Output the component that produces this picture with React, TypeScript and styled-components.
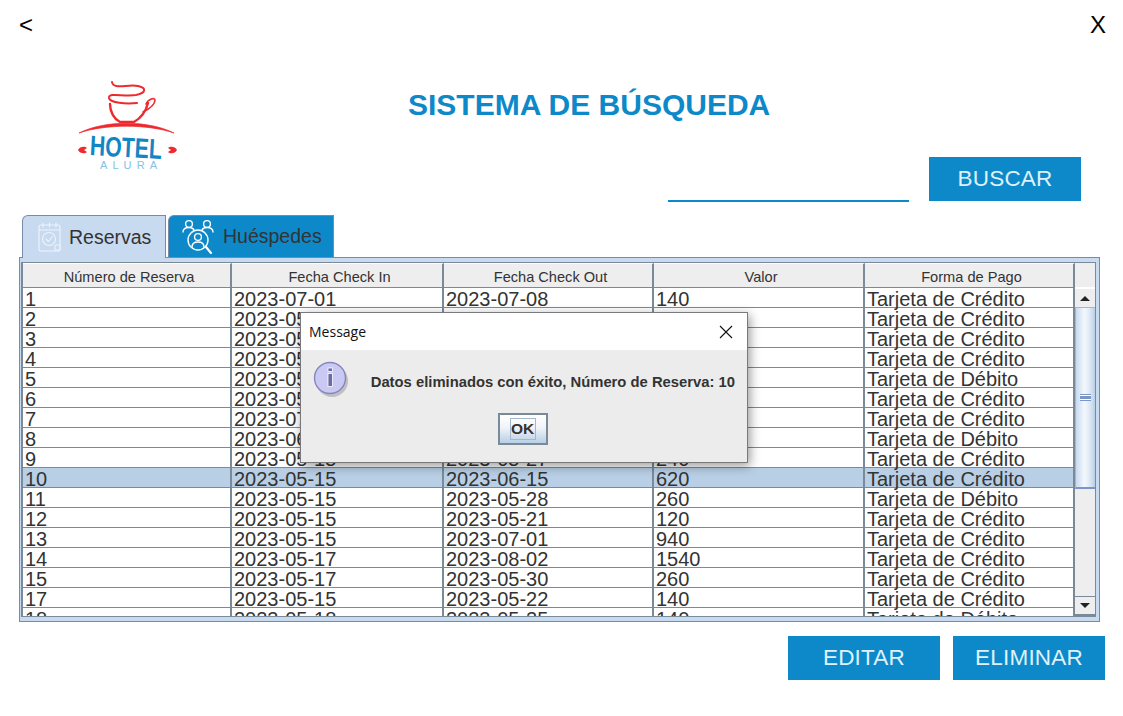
import styled, { createGlobalStyle } from 'styled-components';

const GlobalStyle = createGlobalStyle`
  html, body {
    margin: 0;
    padding: 0;
    background: #fff;
  }
  * {
    box-sizing: border-box;
  }
`;

const BLUE = '#0d89c9';
const COLUMNS = '209px 212px 210px 211px 210px';

const Page = styled.div`
  position: relative;
  width: 1123px;
  height: 716px;
  overflow: hidden;
  display: flex;
  flex-direction: column;
  background: #fff;
  font-family: 'Liberation Sans', Arial, sans-serif;
`;

const TopBar = styled.div`
  height: 50px;
  padding: 9px 17px 0 19px;
  display: flex;
  justify-content: space-between;
  align-items: flex-start;
  font-size: 24px;
  line-height: 32px;
  color: #000;
`;

const Hero = styled.div`
  height: 165px;
  display: flex;
`;

const Logo = styled.svg`
  width: 115px;
  height: 95px;
  margin: 28px 0 0 70px;
  flex: none;
`;

const HeroRight = styled.div`
  width: 673px;
  margin-left: 223px;
  display: flex;
  flex-direction: column;
`;

const Title = styled.h1`
  margin: 37px 0 0;
  font-size: 30px;
  line-height: 36px;
  font-weight: 700;
  color: ${BLUE};
  white-space: nowrap;
`;

const SearchRow = styled.div`
  margin-top: 34px;
  display: flex;
  justify-content: flex-end;
  gap: 20px;
`;

const SearchInput = styled.div`
  width: 241px;
  height: 45px;
  border-bottom: 2px solid ${BLUE};
`;

const ActionButton = styled.button`
  width: 152px;
  height: 44px;
  padding: 0;
  border: none;
  background: ${BLUE};
  color: #dff1fb;
  font-family: inherit;
  font-size: 22.5px;
  letter-spacing: 0.2px;
`;

const TabStrip = styled.div`
  height: 42px;
  padding-left: 22px;
  display: flex;
  align-items: flex-end;
  gap: 2px;
`;

const Tab = styled.div<{ $active?: boolean }>`
  width: ${({ $active }) => ($active ? '144px' : '166px')};
  height: ${({ $active }) => ($active ? '43px' : '42px')};
  margin-bottom: ${({ $active }) => ($active ? '-1px' : '0')};
  display: flex;
  align-items: center;
  gap: ${({ $active }) => ($active ? '7px' : '9px')};
  padding-left: ${({ $active }) => ($active ? '15px' : '13px')};
  border: 1px solid #7a8aa8;
  border-bottom: none;
  border-top-left-radius: 6px;
  background: ${({ $active }) => ($active ? '#c8daf0' : BLUE)};
  color: #333;
  font-size: 19.5px;
  position: relative;
  z-index: ${({ $active }) => ($active ? 2 : 1)};
`;

const TabIcon = styled.svg`
  flex: none;
  fill: none;
  stroke-linecap: round;
  stroke-linejoin: round;
`;

const Pane = styled.div`
  width: 1081px;
  height: 365px;
  margin-left: 19px;
  padding: 4px 3px 4px 1px;
  border: 1px solid #7a8aa8;
  background: #c8daf0;
`;

const TableFrame = styled.div`
  height: 355px;
  display: flex;
  border: 1px solid #7a8a99;
  border-left-width: 2px;
  background: #fff;
`;

const TableBody = styled.div`
  width: 1052px;
  flex: none;
  overflow: hidden;
`;

const HeaderRow = styled.div`
  display: grid;
  grid-template-columns: ${COLUMNS};
  height: 25px;
  background: #eeeeee;
  border-bottom: 1px solid #7a8a99;
`;

const HeaderCell = styled.div`
  padding-left: 5px;
  border-right: 2px solid #7a8a99;
  border-top: 1px solid #fff;
  text-align: center;
  color: #333;
  font-size: 14.6px;
  line-height: 26px;
`;

const Row = styled.div<{ $selected?: boolean }>`
  display: grid;
  grid-template-columns: ${COLUMNS};
  height: 20px;
  background: ${({ $selected }) => ($selected ? '#b8cfe5' : '#fff')};
  border-bottom: 1px solid #7a8a99;
`;

const Cell = styled.div`
  border-right: 2px solid #7a8a99;
  padding-left: 2px;
  color: #333;
  font-size: 20px;
  line-height: 22px;
  height: 19px;
  white-space: nowrap;
`;

const ScrollColumn = styled.div`
  width: 20px;
  flex: none;
  display: flex;
  flex-direction: column;
`;

const ScrollCorner = styled.div`
  height: 25px;
  background: #eeeeee;
  border-bottom: 1px solid #fff;
`;

const ScrollTrack = styled.div`
  flex: 1;
  display: flex;
  flex-direction: column;
  background: #eeeeee;
`;

const ScrollArrow = styled.div<{ $down?: boolean }>`
  height: 20px;
  display: flex;
  align-items: center;
  justify-content: center;
  background: #eeeeee;
  border-top: ${({ $down }) => ($down ? '1px solid #7a8a99' : '1px solid #fff')};
  border-bottom: ${({ $down }) => ($down ? '2px solid #7a8a99' : '1px solid #a3b8cc')};
  margin-top: ${({ $down }) => ($down ? 'auto' : '0')};
  &::before {
    content: '';
    width: 0;
    height: 0;
    border-left: 5px solid transparent;
    border-right: 5px solid transparent;
    border-${({ $down }) => ($down ? 'top' : 'bottom')}: 5px solid #222;
  }
`;

const ScrollThumb = styled.div`
  height: 181px;
  display: flex;
  align-items: center;
  justify-content: center;
  border-bottom: 2px solid #7a96c8;
  border-left: 1px solid #a3b8cc;
  background: linear-gradient(to right, #c8daf0 0%, #f4f8fc 45%, #dbe6f4 75%, #b8cfe5 100%);
  &::before {
    content: '';
    width: 11px;
    height: 5px;
    border-top: 1px solid #7a96c8;
    border-bottom: 1px solid #7a96c8;
    box-shadow: inset 0 1px 0 #fff, inset 0 -1px 0 #fff;
    background: #7a96c8;
    background-clip: content-box;
  }
`;

const Footer = styled.div`
  margin-top: 14px;
  padding-right: 18px;
  display: flex;
  justify-content: flex-end;
  gap: 13px;
`;

const Dialog = styled.div`
  position: absolute;
  left: 300px;
  top: 312px;
  width: 448px;
  height: 151px;
  border: 1px solid #77797c;
  background: #ececec;
  box-shadow: 2px 3px 10px rgba(0, 0, 0, 0.4);
  display: flex;
  flex-direction: column;
`;

const DialogTitleBar = styled.div`
  height: 37px;
  padding: 0 14px 0 8px;
  background: #fff;
  display: flex;
  justify-content: space-between;
  align-items: center;
  color: #111;
  font-family: 'Open Sans', 'Noto Sans', sans-serif;
  font-size: 14px;
`;

const DialogBody = styled.div`
  flex: 1;
  padding: 12px 12px 0 12px;
  display: flex;
  flex-direction: column;
`;

const MessageRow = styled.div`
  display: flex;
  align-items: center;
  justify-content: space-between;
  height: 36px;
`;

const MessageText = styled.div`
  color: #333;
  font-size: 14.8px;
  font-weight: 700;
  white-space: nowrap;
  padding-top: 3px;
`;

const OkButton = styled.button`
  align-self: center;
  width: 50px;
  height: 32px;
  margin: 15px 0 0 -3px;
  padding: 0;
  border: 2px solid #7a8a99;
  background: linear-gradient(to bottom, #fff, #f0f4f9 45%, #b8cfe5);
  display: flex;
  align-items: center;
  justify-content: center;
  color: #333;
  font-family: inherit;
  font-size: 15.5px;
  font-weight: 700;
`;

const OkFocus = styled.span`
  width: 26px;
  height: 22px;
  border: 1px solid #a3b8cc;
  line-height: 20px;
`;

const rows: string[][] = [
  ['1', '2023-07-01', '2023-07-08', '140', 'Tarjeta de Crédito'],
  ['2', '2023-05-10', '2023-05-19', '180', 'Tarjeta de Crédito'],
  ['3', '2023-05-11', '2023-05-18', '140', 'Tarjeta de Crédito'],
  ['4', '2023-05-12', '2023-05-20', '160', 'Tarjeta de Crédito'],
  ['5', '2023-05-13', '2023-05-22', '180', 'Tarjeta de Débito'],
  ['6', '2023-05-13', '2023-05-20', '140', 'Tarjeta de Crédito'],
  ['7', '2023-07-14', '2023-07-25', '220', 'Tarjeta de Crédito'],
  ['8', '2023-06-14', '2023-06-24', '200', 'Tarjeta de Débito'],
  ['9', '2023-05-15', '2023-05-27', '240', 'Tarjeta de Crédito'],
  ['10', '2023-05-15', '2023-06-15', '620', 'Tarjeta de Crédito'],
  ['11', '2023-05-15', '2023-05-28', '260', 'Tarjeta de Débito'],
  ['12', '2023-05-15', '2023-05-21', '120', 'Tarjeta de Crédito'],
  ['13', '2023-05-15', '2023-07-01', '940', 'Tarjeta de Crédito'],
  ['14', '2023-05-17', '2023-08-02', '1540', 'Tarjeta de Crédito'],
  ['15', '2023-05-17', '2023-05-30', '260', 'Tarjeta de Crédito'],
  ['17', '2023-05-15', '2023-05-22', '140', 'Tarjeta de Crédito'],
  ['18', '2023-05-18', '2023-05-25', '140', 'Tarjeta de Débito'],
];

const headers = ['Número de Reserva', 'Fecha Check In', 'Fecha Check Out', 'Valor', 'Forma de Pago'];

const HotelLogo = () => (
  <Logo viewBox="70 78 115 95" aria-label="Hotel Alura">
    <g fill="none" stroke="#ee2a2e" strokeLinecap="round">
      <path
        d="M112 82 C113 90 128 84 138 86 C147 88 146 93 136 95 C124 97 108 92 109 98 C110 103 126 104 137 103"
        strokeWidth="2"
      />
      <path d="M110 104 C110 112 114 119 120 122 L134 122 C141 118 146 111 148 103" strokeWidth="2.4" />
      <path d="M146 104 C148 99 155 97 155 100 C155 105 149 109 143 112" strokeWidth="1.6" />
    </g>
    <path d="M79 133 C105 120 148 120 174 133 C148 124 105 124 79 133 Z" fill="#ee2a2e" stroke="#ee2a2e" strokeWidth="0.7" />
    <path d="M78 150 C80 146 85 146 87 148 L84 150 L87 152 C85 154 80 154 78 150 Z" fill="#ee2a2e" />
    <path d="M177 150 C175 146 170 146 168 148 L171 150 L168 152 C170 154 175 154 177 150 Z" fill="#ee2a2e" />
    <text
      x="90"
      y="157"
      fill="#1285c4"
      fontFamily="'Liberation Sans', Arial, sans-serif"
      fontSize="28"
      fontWeight="700"
      textLength="72"
      lengthAdjust="spacingAndGlyphs"
      transform="rotate(3 126 147)"
    >
      HOTEL
    </text>
    <text
      x="100"
      y="169"
      fill="#84c2e4"
      fontFamily="'Liberation Sans', Arial, sans-serif"
      fontSize="11"
      textLength="57"
      lengthAdjust="spacing"
    >
      ALURA
    </text>
  </Logo>
);

const CalendarIcon = () => (
  <TabIcon width="24" height="32" viewBox="0 0 24 32" stroke="#eef4fb" strokeWidth="1.1">
    <rect x="1" y="4" width="21" height="26" rx="2" />
    <path d="M1 9 H22 M5 2 V6 M11.5 2 V6 M18 2 V6" />
    <circle cx="11" cy="18" r="6.5" />
    <path d="M8 18 L10.5 20.5 L14.5 15.5" />
    <rect x="17" y="24" width="5" height="5" rx="1" fill="#c8daf0" />
  </TabIcon>
);

const GuestsIcon = () => (
  <TabIcon width="32" height="36" viewBox="0 0 32 36" stroke="#fff" strokeWidth="1.4">
    <circle cx="7" cy="5" r="3.4" />
    <path d="M1 13 C1 9 4 8.5 7 8.5 C9 8.5 11 9 12 11" />
    <circle cx="25" cy="5" r="3.4" />
    <path d="M31 13 C31 9 28 8.5 25 8.5 C23 8.5 21 9 20 11" />
    <circle cx="16" cy="21" r="10" />
    <circle cx="16" cy="18" r="3.4" />
    <path d="M10 28 C10 24 13 23 16 23 C19 23 22 24 22 28" />
    <path d="M24 28 L29 34" strokeWidth="2.2" />
  </TabIcon>
);

const InfoIcon = () => (
  <svg width="36" height="38" viewBox="0 0 36 38" style={{ flex: 'none' }}>
    <circle cx="19" cy="20" r="16" fill="#9a9aa4" opacity="0.55" />
    <circle cx="17" cy="17" r="15.5" fill="#c9c9f4" stroke="#8686bd" strokeWidth="1.4" />
    <rect x="15" y="7" width="4.5" height="3.5" fill="#6b6ba5" stroke="#fff" strokeWidth="0.8" />
    <rect x="15" y="12.5" width="4.5" height="13" fill="#6b6ba5" stroke="#fff" strokeWidth="0.8" />
  </svg>
);

const CloseIcon = () => (
  <svg width="14" height="14" viewBox="0 0 14 14" stroke="#111" strokeWidth="1.1">
    <path d="M1 1 L13 13 M13 1 L1 13" />
  </svg>
);

export default function App() {
  return (
    <Page>
      <GlobalStyle />
      <TopBar>
        <span>&lt;</span>
        <span>X</span>
      </TopBar>
      <Hero>
        <HotelLogo />
        <HeroRight>
          <Title>SISTEMA DE BÚSQUEDA</Title>
          <SearchRow>
            <SearchInput />
            <ActionButton>BUSCAR</ActionButton>
          </SearchRow>
        </HeroRight>
      </Hero>
      <TabStrip>
        <Tab $active>
          <CalendarIcon />
          Reservas
        </Tab>
        <Tab>
          <GuestsIcon />
          Huéspedes
        </Tab>
      </TabStrip>
      <Pane>
        <TableFrame>
          <TableBody>
            <HeaderRow>
              {headers.map((h) => (
                <HeaderCell key={h}>{h}</HeaderCell>
              ))}
            </HeaderRow>
            {rows.map((row) => (
              <Row key={row[0]} $selected={row[0] === '10'}>
                {row.map((value, i) => (
                  <Cell key={i}>{value}</Cell>
                ))}
              </Row>
            ))}
          </TableBody>
          <ScrollColumn>
            <ScrollCorner />
            <ScrollTrack>
              <ScrollArrow />
              <ScrollThumb />
              <ScrollArrow $down />
            </ScrollTrack>
          </ScrollColumn>
        </TableFrame>
      </Pane>
      <Footer>
        <ActionButton>EDITAR</ActionButton>
        <ActionButton>ELIMINAR</ActionButton>
      </Footer>
      <Dialog>
        <DialogTitleBar>
          <span>Message</span>
          <CloseIcon />
        </DialogTitleBar>
        <DialogBody>
          <MessageRow>
            <InfoIcon />
            <MessageText>Datos eliminados con éxito, Número de Reserva: 10</MessageText>
          </MessageRow>
          <OkButton>
            <OkFocus>OK</OkFocus>
          </OkButton>
        </DialogBody>
      </Dialog>
    </Page>
  );
}
